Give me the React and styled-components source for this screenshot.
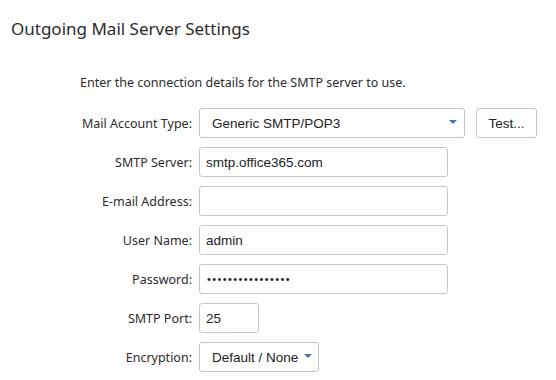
import React from 'react';
import styled, { createGlobalStyle } from 'styled-components';

const GlobalStyle = createGlobalStyle`
  body {
    margin: 0;
    padding: 0;
    background: #ffffff;
    font-family: 'Noto Sans', 'Liberation Sans', sans-serif;
    color: #333333;
  }
`;

const Page = styled.div`
  width: 556px;
  height: 380px;
  overflow: hidden;
  padding: 18px 0 0 11px;
  box-sizing: border-box;
`;

const Title = styled.h1`
  margin: 0;
  font-size: 17px;
  font-weight: 400;
  color: #2b2b2b;
  line-height: 22px;
`;

const Intro = styled.p`
  margin: 35px 0 0 69px;
  font-size: 12.5px;
  line-height: 16px;
  color: #2b2b2b;
`;

const Form = styled.div`
  display: grid;
  grid-template-columns: 181px auto;
  column-gap: 7px;
  row-gap: 9px;
  margin-top: 17px;
  align-items: center;
`;

const Label = styled.label`
  text-align: right;
  font-size: 12.5px;
  color: #2b2b2b;
`;

const Field = styled.div`
  display: flex;
  align-items: center;
  gap: 11px;
`;

const Input = styled.input`
  box-sizing: border-box;
  width: ${p => p.$width}px;
  height: 30px;
  padding: 0 6px;
  border: 1px solid #c6c6c6;
  border-radius: 3px;
  font-family: 'Liberation Sans', Arial, sans-serif;
  font-size: 13.5px;
  color: #222;
  outline: none;
  background: #fff;

  &[type='password'] {
    padding-left: 7px;
    font-size: 11px;
    letter-spacing: 1.4px;
  }
`;

const Select = styled.div`
  box-sizing: border-box;
  width: ${p => p.$width}px;
  height: 30px;
  padding: 0 7px 0 12px;
  border: 1px solid #c6c6c6;
  border-radius: 3px;
  display: flex;
  align-items: center;
  justify-content: space-between;
  gap: 6px;
  font-family: 'Liberation Sans', Arial, sans-serif;
  font-size: 13.5px;
  color: #222;
  white-space: nowrap;
`;

const Caret = styled.span`
  flex-shrink: 0;
  width: 0;
  height: 0;
  margin-top: -2px;
  border-left: 4px solid transparent;
  border-right: 4px solid transparent;
  border-top: 4px solid #3b78b8;
`;

const Button = styled.button`
  box-sizing: border-box;
  height: 30px;
  width: 61px;
  border: 1px solid #c6c6c6;
  border-radius: 3px;
  background: #fff;
  font-family: 'Liberation Sans', Arial, sans-serif;
  font-size: 13.5px;
  color: #222;
  padding: 0;
`;

const App = () => (
  <>
    <GlobalStyle />
    <Page>
      <Title>Outgoing Mail Server Settings</Title>
      <Intro>Enter the connection details for the SMTP server to use.</Intro>
      <Form>
        <Label>Mail Account Type:</Label>
        <Field>
          <Select $width={266}>
            Generic SMTP/POP3
            <Caret />
          </Select>
          <Button>Test...</Button>
        </Field>

        <Label>SMTP Server:</Label>
        <Field>
          <Input $width={249} defaultValue="smtp.office365.com" />
        </Field>

        <Label>E-mail Address:</Label>
        <Field>
          <Input $width={249} defaultValue="" />
        </Field>

        <Label>User Name:</Label>
        <Field>
          <Input $width={249} defaultValue="admin" />
        </Field>

        <Label>Password:</Label>
        <Field>
          <Input $width={249} type="password" defaultValue="aaaaaaaaaaaaaaaa" />
        </Field>

        <Label>SMTP Port:</Label>
        <Field>
          <Input $width={60} defaultValue="25" />
        </Field>

        <Label>Encryption:</Label>
        <Field>
          <Select $width={120}>
            Default / None
            <Caret />
          </Select>
        </Field>
      </Form>
    </Page>
  </>
);

export default App;
